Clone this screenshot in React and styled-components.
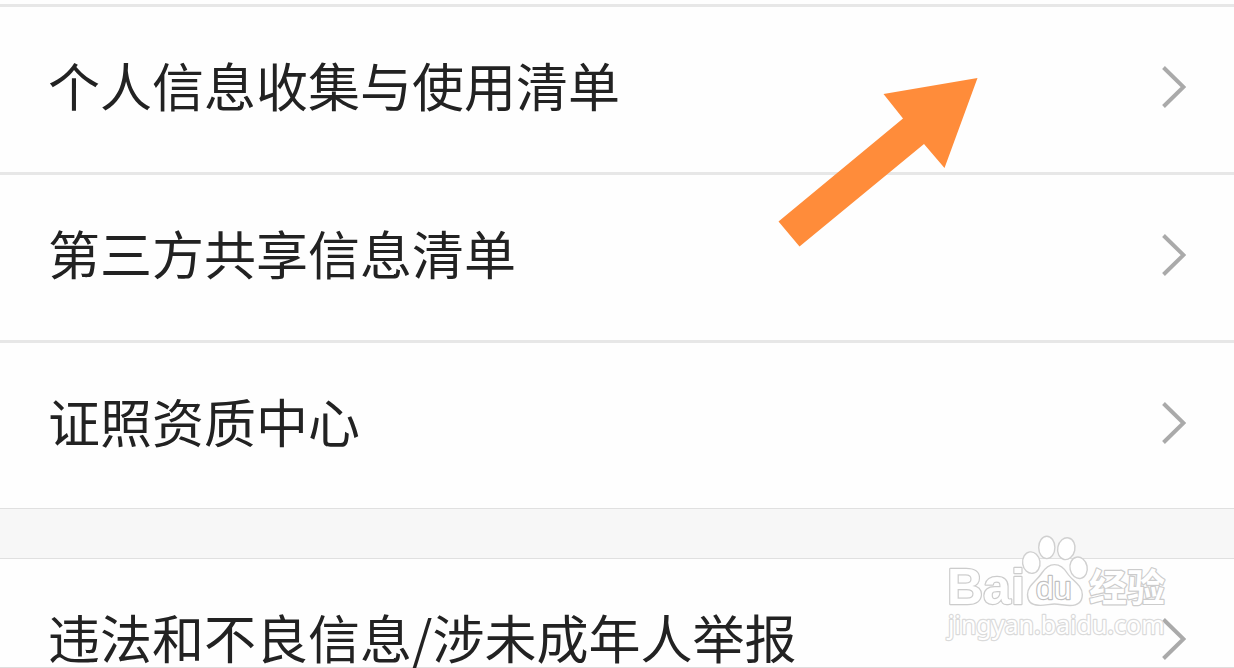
import React from "react";
import styled, { createGlobalStyle } from "styled-components";

const GlobalStyle = createGlobalStyle`
  *, *::before, *::after { box-sizing: border-box; }
  body {
    margin: 0;
    background: #fefefe;
    color: #222;
    font-family: "Noto Sans CJK SC", "Noto Sans", sans-serif;
  }
`;

const Page = styled.main`
  position: relative;
  padding-top: 4px;
  overflow: hidden;
`;

const List = styled.nav`
  display: flex;
  flex-direction: column;
`;

const Row = styled.a`
  display: flex;
  align-items: center;
  justify-content: space-between;
  padding: 52px 48px ${(p) => (p.$last ? 0 : 57)}px;
  border-top: ${(p) => (p.$first ? 0 : 3)}px solid #e7e7e7;
  border-bottom: ${(p) => (p.$last ? 1 : 0)}px solid #dedede;
  color: inherit;
  text-decoration: none;
`;

const Label = styled.span`
  padding-bottom: 4px;
  font-size: 52px;
  line-height: 52px;
  white-space: nowrap;
`;

const Chevron = styled.svg`
  flex: none;
  width: 24px;
  height: 44px;
  fill: none;
  stroke: #aaa;
  stroke-width: 4;
`;

const Divider = styled.div`
  height: 51px;
  background: #f7f7f7;
  border-top: 1px solid #e0e0e0;
  border-bottom: 1px solid #e0e0e0;
`;

const Pointer = styled.svg`
  position: absolute;
  top: 76px;
  right: 254px;
  width: 204px;
  height: 172px;
  fill: #ff8c3a;
  pointer-events: none;
`;

const Watermark = styled.svg`
  position: absolute;
  right: 0;
  bottom: 0;
  width: 300px;
  height: 140px;
  fill: #fff;
  stroke: #d0d0d0;
  stroke-width: 1.4;
  pointer-events: none;
`;

const MarkText = styled.text`
  font-family: ${(p) => p.$family}, "Noto Sans CJK SC", sans-serif;
  font-size: ${(p) => p.$size}px;
  font-weight: ${(p) => p.$weight || 700};
  paint-order: stroke;
  stroke: ${(p) => p.$stroke || "#cccccc"};
  stroke-width: 2.4;
  stroke-linejoin: round;
`;

const mainItems = ["个人信息收集与使用清单", "第三方共享信息清单", "证照资质中心"];
const reportItems = ["违法和不良信息/涉未成年人举报"];

function Item({ label, first, last }) {
  return (
    <Row href="#" $first={first} $last={last}>
      <Label>{label}</Label>
      <Chevron viewBox="0 0 24 44" aria-hidden="true">
        <path d="M1.5 2.5 L21.5 22 L1.5 41.5" />
      </Chevron>
    </Row>
  );
}

function BaiduMark() {
  return (
    <Watermark viewBox="0 0 300 140">
      <MarkText x="13" y="76" $size={50} $family='"Liberation Sans"'>Bai</MarkText>
      <ellipse cx="97.3" cy="34.6" rx="8.7" ry="10.8" transform="rotate(-8 97.3 34.6)" />
      <ellipse cx="112.8" cy="19.4" rx="8.1" ry="11.2" />
      <ellipse cx="132.3" cy="20.7" rx="8.6" ry="11" transform="rotate(12 132.3 20.7)" />
      <ellipse cx="144.6" cy="39.8" rx="8.6" ry="10.8" transform="rotate(-12 144.6 39.8)" />
      <path d="M120.5 36.6 C127 36.6 130.5 40.5 133.5 45.5 C137.5 52 148.3 57 148.3 66.5 C148.3 74.5 143 77.5 136 77.5 C130 77.5 126 76 120.5 76 C115 76 111.5 77.7 104.5 77.3 C97 77 93.5 72.5 93.5 66.5 C93.5 57.5 103 52.5 107.5 45.5 C110.7 40.5 114 36.6 120.5 36.6 Z" />
      <MarkText x="102" y="71" $size={32} $family='"Liberation Sans"' $weight={400} $stroke="#c0c0c0">du</MarkText>
      <MarkText x="155" y="73" $size={38} $family='"Noto Sans CJK SC"'>经验</MarkText>
      <MarkText x="14" y="106" $size={25} $family='"Noto Sans"' $weight={400} $stroke="#dadada">jingyan.baidu.com</MarkText>
    </Watermark>
  );
}

export default function App() {
  return (
    <>
      <GlobalStyle />
      <Page>
        <List>
          {mainItems.map((label) => (
            <Item key={label} label={label} />
          ))}
        </List>
        <Divider />
        <List>
          {reportItems.map((label) => (
            <Item key={label} label={label} first last />
          ))}
        </List>
        <Pointer viewBox="0 0 204 172" aria-hidden="true">
          <path d="M201.5 2 L168.5 92 L148 68 L23.5 170.5 L2.5 145.5 L127 42.5 L107.5 18 Z" />
        </Pointer>
        <BaiduMark />
      </Page>
    </>
  );
}
